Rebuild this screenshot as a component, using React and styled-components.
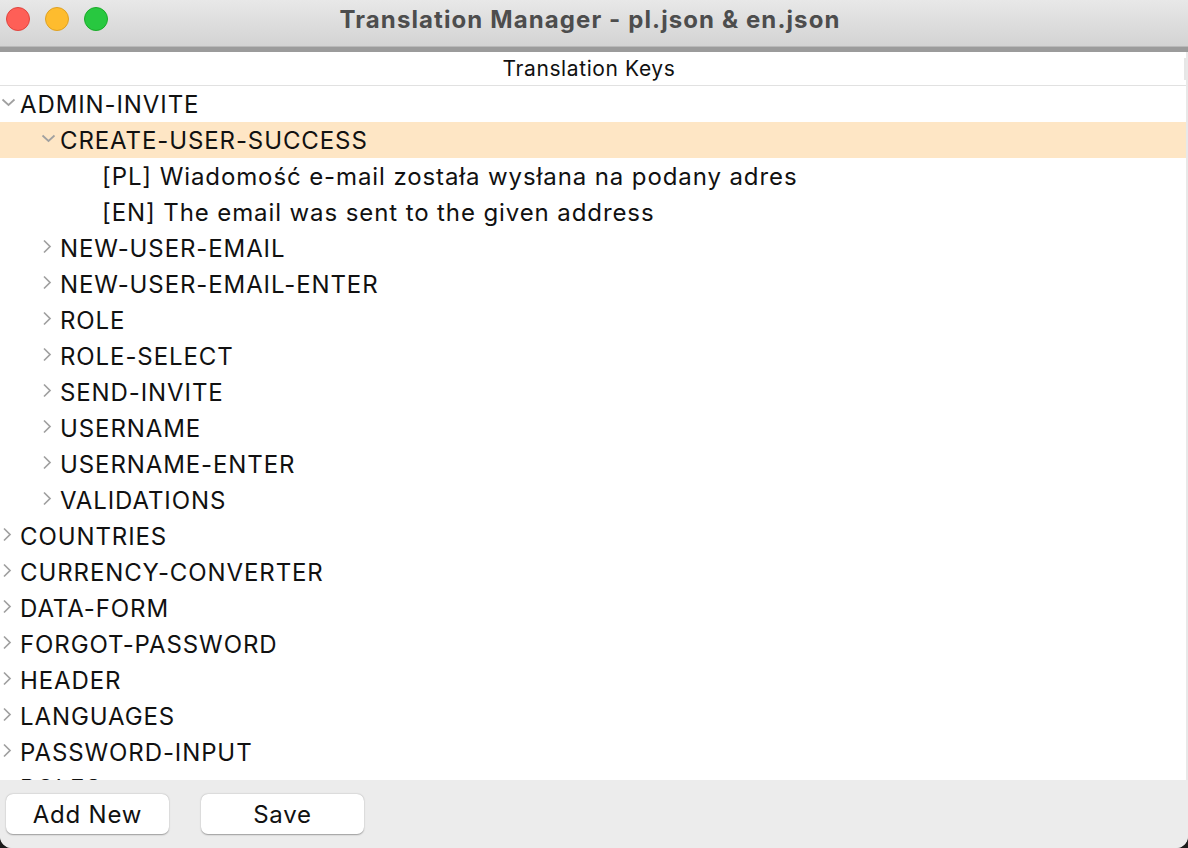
import React from "react";
import styled, { createGlobalStyle } from "styled-components";

const GlobalStyle = createGlobalStyle`
  html, body {
    margin: 0;
    padding: 0;
    background: #1c1c1c;
  }
  body {
    font-family: Inter, "Liberation Sans", Arial, sans-serif;
  }
`;

const tree = [
  {
    key: "ADMIN-INVITE",
    open: true,
    children: [
      {
        key: "CREATE-USER-SUCCESS",
        open: true,
        selected: true,
        values: [
          "[PL] Wiadomość e-mail została wysłana na podany adres",
          "[EN] The email was sent to the given address",
        ],
      },
      { key: "NEW-USER-EMAIL" },
      { key: "NEW-USER-EMAIL-ENTER" },
      { key: "ROLE" },
      { key: "ROLE-SELECT" },
      { key: "SEND-INVITE" },
      { key: "USERNAME" },
      { key: "USERNAME-ENTER" },
      { key: "VALIDATIONS" },
    ],
  },
  { key: "COUNTRIES" },
  { key: "CURRENCY-CONVERTER" },
  { key: "DATA-FORM" },
  { key: "FORGOT-PASSWORD" },
  { key: "HEADER" },
  { key: "LANGUAGES" },
  { key: "PASSWORD-INPUT" },
  { key: "ROLES" },
];

const Chevron = ({ open }) =>
  open ? (
    <svg width="15" height="10" viewBox="0 0 15 10">
      <polyline points="1.5,2.5 7.5,8 13.5,2.5" fill="none" stroke="#a0a0a0" strokeWidth="1.7" />
    </svg>
  ) : (
    <svg width="11" height="15" viewBox="0 0 11 15">
      <polyline points="3,1.5 9,7.5 3,13.5" fill="none" stroke="#a0a0a0" strokeWidth="1.7" />
    </svg>
  );

const flatten = (nodes, level = 0, out = []) => {
  nodes.forEach((n) => {
    out.push({ type: "key", level, ...n });
    if (n.open && n.children) flatten(n.children, level + 1, out);
    if (n.open && n.values)
      n.values.forEach((v) => out.push({ type: "value", level: level + 1, key: v }));
  });
  return out;
};

export default function App() {
  const rows = flatten(tree);
  return (
    <>
      <GlobalStyle />
      <Window>
        <TitleBar>
          <Lights>
            <Light color="#fe5f57" border="#e0443e" />
            <Light color="#febc2e" border="#dea123" />
            <Light color="#28c840" border="#1aab29" />
          </Lights>
          <Title>Translation Manager - pl.json &amp; en.json</Title>
        </TitleBar>
        <Divider />
        <TreePanel>
          <ColumnHeader>
            Translation Keys
            <ScrollNub />
          </ColumnHeader>
          <Rows>
            {rows.map((r, i) => (
              <Row key={i} selected={r.selected} level={r.level} leaf={r.type === "value"}>
                {r.type === "key" && (
                  <Arrow>
                    <Chevron open={r.open} />
                  </Arrow>
                )}
                <Label>{r.key}</Label>
              </Row>
            ))}
          </Rows>
        </TreePanel>
        <Footer>
          <Button>Add New</Button>
          <Button>Save</Button>
        </Footer>
      </Window>
    </>
  );
}

const Window = styled.div`
  width: 1188px;
  height: 848px;
  display: flex;
  flex-direction: column;
  background: #ececec;
  border-radius: 0 0 12px 12px;
  overflow: hidden;
`;

const TitleBar = styled.div`
  height: 46px;
  flex-shrink: 0;
  position: relative;
  display: flex;
  align-items: center;
  justify-content: center;
  background: linear-gradient(#e8e8e8, #d3d3d3);
  border-bottom: 1px solid #b9b9b9;
`;

const Lights = styled.div`
  position: absolute;
  left: 6px;
  top: 7px;
  display: flex;
  gap: 15px;
`;

const Light = styled.span`
  width: 24px;
  height: 24px;
  border-radius: 50%;
  background: ${(p) => p.color};
  border: 0.5px solid ${(p) => p.border};
  box-sizing: border-box;
`;

const Title = styled.div`
  font-size: 24px;
  font-weight: 700;
  letter-spacing: 1.1px;
  color: #4d4d4d;
  margin-left: -8px;
  margin-top: -7px;
`;

const Divider = styled.div`
  height: 5px;
  flex-shrink: 0;
  background: #9b9b9b;
`;

const TreePanel = styled.div`
  flex: 1;
  min-height: 0;
  display: flex;
  flex-direction: column;
  background: #fff;
  overflow: hidden;
  border-right: 2px solid #e8e8e8;
`;

const ColumnHeader = styled.div`
  height: 33px;
  flex-shrink: 0;
  position: relative;
  display: flex;
  align-items: center;
  justify-content: center;
  padding-right: 8px;
  font-size: 21px;
  letter-spacing: 0.6px;
  color: #111;
  border-bottom: 1px solid #e1e1e1;
`;

const ScrollNub = styled.span`
  position: absolute;
  right: -2px;
  top: 6px;
  width: 4px;
  height: 22px;
  background: #e6e6e6;
`;

const Rows = styled.div`
  display: flex;
  flex-direction: column;
`;

const Row = styled.div`
  height: 36px;
  flex-shrink: 0;
  display: flex;
  align-items: center;
  padding-left: ${(p) => (p.leaf ? 102 : p.level * 40)}px;
  background: ${(p) => (p.selected ? "#fee6c5" : "transparent")};
`;

const Arrow = styled.span`
  width: 20px;
  height: 20px;
  display: flex;
  align-items: center;
  justify-content: flex-start;
  padding-left: 1px;
  box-sizing: border-box;
  margin-top: -4px;
`;

const Label = styled.span`
  font-size: 24px;
  letter-spacing: 0.9px;
  color: #111;
  white-space: nowrap;
  margin-top: 1px;
`;

const Footer = styled.div`
  height: 68px;
  flex-shrink: 0;
  display: flex;
  align-items: center;
  gap: 32px;
  padding: 0 6px;
  background: #ececec;
`;

const Button = styled.button`
  width: ${(p) => p.width || 163}px;
  height: 40px;
  border: none;
  border-radius: 7px;
  background: #fff;
  box-shadow: 0 0.5px 1.5px rgba(0, 0, 0, 0.35);
  font-family: Inter, "Liberation Sans", Arial, sans-serif;
  font-size: 24px;
  letter-spacing: 0.8px;
  color: #111;
  padding: 0;
`;
